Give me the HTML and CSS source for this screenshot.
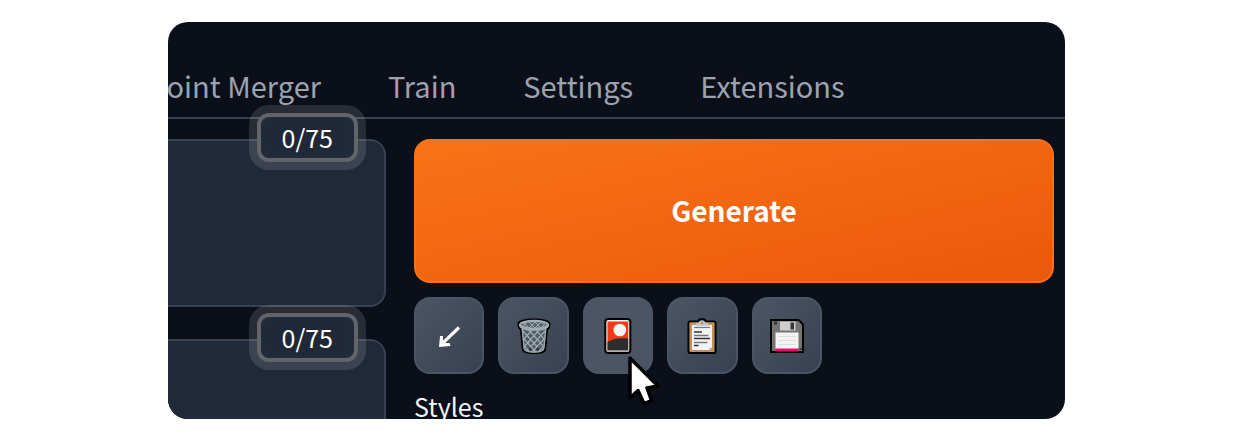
FILE: index.html
```html
<!DOCTYPE html>
<html lang="en">
<head>
<meta charset="utf-8">
<title>Generate</title>
<link rel="stylesheet" href="styles.css">
</head>
<body>
<main class="panel">
  <nav class="tabs">
    <a class="tab tab-first" href="#merger">Checkpoint Merger</a>
    <a class="tab" href="#train">Train</a>
    <a class="tab" href="#settings">Settings</a>
    <a class="tab" href="#extensions">Extensions</a>
  </nav>
  <div class="content">
    <div class="prompts">
      <div class="prompt">
        <textarea class="prompt-input" aria-label="Prompt"></textarea>
        <span class="counter">0/75</span>
      </div>
      <div class="prompt">
        <textarea class="prompt-input" aria-label="Negative prompt"></textarea>
        <span class="counter">0/75</span>
      </div>
    </div>
    <div class="actions">
      <button class="generate" type="button">Generate</button>
      <div class="tools">
        <button class="tool" type="button" aria-label="Read parameters">
          <svg class="icon" viewBox="0 0 36 36" fill="none" stroke="#fff">
            <path d="M28 9.500 12 24.800" stroke-width="3.200"/>
            <path d="M8 29 9 18h3c-.3 2.500 0 4 1 5.300l1 .9c1.300 1 2.500 1 4.500.8l1 3Z" fill="#fff" stroke="none"/>
          </svg>
        </button>
        <button class="tool" type="button" aria-label="Clear prompt">
          <svg class="icon" viewBox="0 0 36 36">
            <path d="M1.500 6C1.500 2 9 .5 18 .5S34.500 2 34.500 6c0 3-.7 5-2.500 6l-1.800 19c-.3 4-4.500 5-12.200 5S6.100 35 5.800 31L4 12C2.200 11 1.500 9 1.500 6Z" fill="#000"/>
            <path d="m5.800 10 2 20.500c.3 3 4 4 10.200 4s9.900-1 10.200-4l2-20.500Z" fill="#505a62"/>
            <path d="m7 13 18 20M12 11l16 18M19 11l10 11M8 21l12 13M8 28l6 6M29 13 11 33M24 11 8 29M17 11 7 22M28 21 16 34M28 28l-6 6" fill="none" stroke="#9dabb2" stroke-width="1.300"/>
            <path d="m12 31 2-2 2 2-2 2ZM20 31l2-2 2 2-2 2Z" fill="#322e33"/>
            <path d="m6.200 11 2 19.500c.2 2.500 4 3.500 9.800 3.500s9.600-1 9.800-3.500l2-19.500" fill="none" stroke="#9dabb2" stroke-width="1.400"/>
            <ellipse cx="18" cy="6.800" rx="14" ry="4" fill="#59656d" stroke="#a2b0b6" stroke-width="2.200"/>
            <path d="m8 5 5 5 6-6 6 6 4-4M7 8l5-5 7 7 6-6 4 3" fill="none" stroke="#9dabb2"/>
            <path d="M4 7c0 3 5 4.800 14 4.800S32 10 32 7" fill="none" stroke="#9dabb2" stroke-width="2"/>
          </svg>
        </button>
        <button class="tool tool-hover" type="button" aria-label="Show extra networks">
          <svg class="icon" viewBox="0 0 36 36">
            <rect x="4.300" y="0" width="27" height="36" rx="4" fill="#000"/>
            <rect x="6.300" y="2" width="23" height="32" rx="2" fill="#f1f1ef"/>
            <path d="M7.500 3.500h20.700v29H7.500Z" fill="#f03a17"/>
            <path d="M7.500 24c5-3.500 11-4.500 20.700-3.500v12H7.500Z" fill="#2d2d2d"/>
            <circle cx="19.800" cy="12" r="6.300" fill="#f3f3f3"/>
            <path d="M7 33.200h21.700" stroke="#a5b0ad" stroke-width="1.500"/>
          </svg>
        </button>
        <button class="tool" type="button" aria-label="Apply styles">
          <svg class="icon" viewBox="0 0 36 36">
            <path d="M6 2.500h7.500C14 .8 16 0 18 0s4 .8 4.500 2.500H30a2.500 2.500 0 0 1 2.500 2.500v28.500a2.500 2.500 0 0 1-2.500 2.500H6A2.500 2.500 0 0 1 3.500 33.500V5A2.500 2.500 0 0 1 6 2.500Z" fill="#000"/>
            <rect x="5.400" y="4.300" width="25.200" height="29.800" rx="1" fill="#c1905f"/>
            <path d="M8 7h20v22.500l-2.500 2.500H8Z" fill="#f3f3f3"/>
            <path d="M25.500 32v-2.500H28Z" fill="#b9b5b0"/>
            <path d="M10 9.500h16" stroke="#777" stroke-width="1.200"/>
            <path d="M11.500 8c0-3 1.500-3 3.500-3.500 0-3 6-3 6 0 2 .5 3.500.5 3.500 3.500Z" fill="#c8c8c8"/>
            <circle cx="18" cy="5" r="1.400" fill="#c38c63"/>
            <path d="M10 14h8M10 20.500h16M10 27.500h4.500" stroke="#333" stroke-width="1.300"/>
            <path d="M10 17.500h14.500M10 24.500h13.500" stroke="#777" stroke-width="1.500"/>
          </svg>
        </button>
        <button class="tool" type="button" aria-label="Save style">
          <svg class="icon" viewBox="0 0 36 36">
            <path d="M1 1h29l5 5v29H1Z" fill="#000"/>
            <path d="M3 3h26.500L33 7v26H3Z" fill="#747474"/>
            <path d="M5 3.500h3v3H5ZM30.500 30h2v2h-2Z" fill="#353535"/>
            <path d="M11 3.500h15.500v9H11Z" fill="#cdcdcd"/>
            <path d="M21.500 4.500H25v7h-3.500Z" fill="#353535"/>
            <path d="M6.500 14.500h23V31h-23Z" fill="#f3f3f3"/>
            <path d="M9 18.500h18M9 22.500h18M9 26.500h18" stroke="#dedede"/>
            <path d="M6.500 30.500h23v3h-23Z" fill="#f10b68"/>
          </svg>
        </button>
        <svg class="cursor" viewBox="0 0 34 50" aria-hidden="true">
          <path d="M3 3v40l8-7.500L17 48.500l7.500-3L20 33l11-2Z" fill="#fff" stroke="#000" stroke-width="3.500" stroke-linejoin="round"/>
        </svg>
      </div>
      <div class="styles-label">Styles</div>
    </div>
  </div>
</main>
</body>
</html>
```
FILE: styles.css
```css
* {
  box-sizing: border-box;
}

body {
  margin: 0;
  padding: 22px 168px;
  background: #fff;
  font-family: "Noto Sans CJK SC", "Noto Sans", sans-serif;
}

.panel {
  height: calc(100vh - 44px);
  overflow: hidden;
  border-radius: 20px;
  background: #0b0f19;
  color: #f3f4f6;
}

.tabs {
  display: flex;
  gap: 67px;
  padding-top: 43px;
  border-bottom: 2px solid #374151;
}

.tab {
  padding-bottom: 12px;
  color: #9ca3af;
  font-size: 29px;
  line-height: 40px;
  text-decoration: none;
  white-space: nowrap;
}

.tab-first {
  display: flex;
  justify-content: flex-end;
  width: 153px;
}

.content {
  display: grid;
  grid-template-columns: 218px 1fr;
  gap: 28px;
  padding: 20px 11px 0 0;
}

.prompts {
  display: flex;
  flex-direction: column;
  gap: 32px;
}

.prompt {
  position: relative;
}

.prompt-input {
  display: block;
  width: 100%;
  height: 168px;
  padding: 20px;
  border: 2px solid #374151;
  border-left: 0;
  border-radius: 0 16px 16px 0;
  background: #1f2937;
  color: #f3f4f6;
  font: inherit;
  resize: none;
}

.counter {
  position: absolute;
  top: -26px;
  right: 28px;
  padding: 0 21px;
  border: 4px solid #60656b;
  border-radius: 12px;
  background: #1f2937;
  box-shadow: 0 0 0 8px rgba(255, 255, 255, 0.12), inset 0 0 12px #24303d;
  color: #fff;
  font-size: 25px;
  line-height: 41px;
}

.generate {
  display: block;
  width: 100%;
  height: 144px;
  padding: 0 0 2px;
  border: 2px solid #f97316;
  border-radius: 16px;
  background: linear-gradient(to bottom right, #f97316, #ea580c);
  color: #fff;
  font: inherit;
  font-size: 28px;
  font-weight: 700;
}

.tools {
  position: relative;
  display: grid;
  grid-template-columns: repeat(5, 1fr);
  gap: 14px;
  max-width: 408px;
  margin-top: 14px;
}

.tool {
  display: flex;
  align-items: center;
  justify-content: center;
  height: 77px;
  padding: 0;
  border: 2px solid #4b5563;
  border-radius: 16px;
  background: linear-gradient(to bottom right, #4b5563, #374151);
}

.tool-hover {
  background: #4b5563;
}

.icon {
  width: 36px;
  height: 36px;
}

.cursor {
  position: absolute;
  top: 58px;
  left: 213px;
  width: 34px;
  height: 50px;
}

.styles-label {
  margin-top: 12px;
  font-size: 25px;
  line-height: 40px;
}
```
